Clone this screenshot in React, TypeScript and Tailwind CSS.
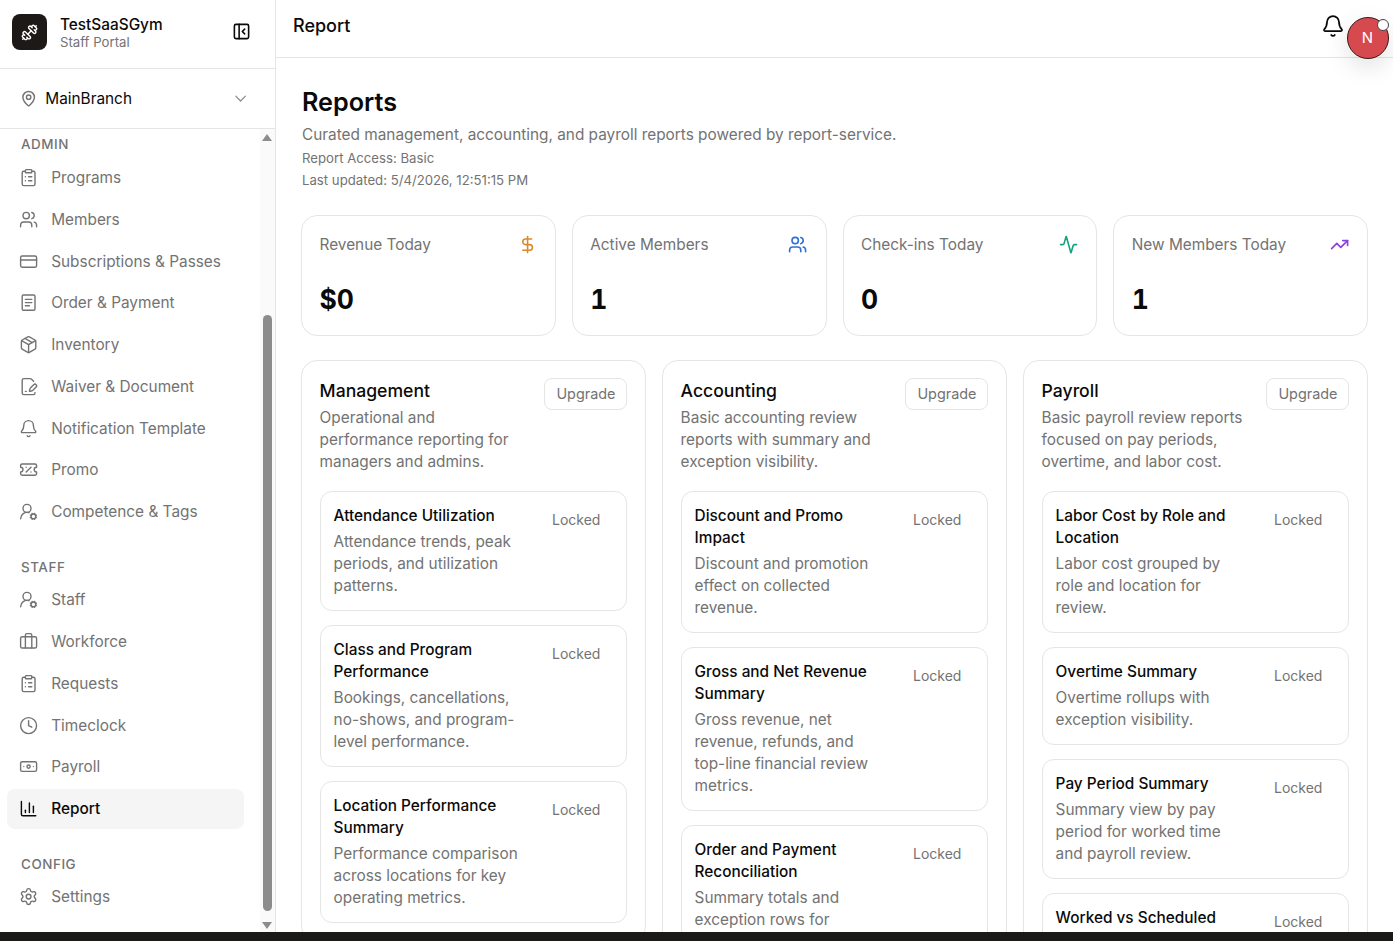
import {
  Activity,
  Banknote,
  Bell,
  Briefcase,
  ChartColumn,
  ChevronDown,
  ClipboardList,
  Clock,
  CreditCard,
  DollarSign,
  Dumbbell,
  FilePenLine,
  MapPin,
  Package,
  PanelLeftClose,
  Settings,
  TicketPercent,
  TrendingUp,
  UserRoundCog,
  Users,
} from "lucide-react";

function OrderIcon({ size = 24, strokeWidth = 2 }: { size?: number; strokeWidth?: number }) {
  return (
    <svg width={size} height={size} viewBox="0 0 24 24" fill="none" stroke="currentColor" strokeWidth={strokeWidth} strokeLinecap="round" strokeLinejoin="round">
      <rect x="4" y="2.5" width="16" height="19" rx="1.5" />
      <path d="M8 8h8M8 12h8M8 16h5" />
    </svg>
  );
}

const navSections = [
  {
    label: "ADMIN",
    items: [
      { name: "Programs", icon: ClipboardList },
      { name: "Members", icon: Users },
      { name: "Subscriptions & Passes", icon: CreditCard },
      { name: "Order & Payment", icon: OrderIcon },
      { name: "Inventory", icon: Package },
      { name: "Waiver & Document", icon: FilePenLine },
      { name: "Notification Template", icon: Bell },
      { name: "Promo", icon: TicketPercent },
      { name: "Competence & Tags", icon: UserRoundCog },
    ],
  },
  {
    label: "STAFF",
    items: [
      { name: "Staff", icon: UserRoundCog },
      { name: "Workforce", icon: Briefcase },
      { name: "Requests", icon: ClipboardList },
      { name: "Timeclock", icon: Clock },
      { name: "Payroll", icon: Banknote },
      { name: "Report", icon: ChartColumn, active: true },
    ],
  },
  {
    label: "CONFIG",
    items: [{ name: "Settings", icon: Settings }],
  },
];

const stats = [
  { title: "Revenue Today", value: "$0", icon: DollarSign, color: "text-[#d98a2b]" },
  { title: "Active Members", value: "1", icon: Users, color: "text-[#2f6fd6]" },
  { title: "Check-ins Today", value: "0", icon: Activity, color: "text-[#16a37f]" },
  { title: "New Members Today", value: "1", icon: TrendingUp, color: "text-[#8b3fe0]" },
];

const columns = [
  {
    title: "Management",
    desc: "Operational and performance reporting for managers and admins.",
    reports: [
      { title: "Attendance Utilization", desc: "Attendance trends, peak periods, and utilization patterns." },
      { title: "Class and Program Performance", desc: "Bookings, cancellations, no-shows, and program-level performance." },
      { title: "Location Performance Summary", desc: "Performance comparison across locations for key operating metrics." },
    ],
  },
  {
    title: "Accounting",
    desc: "Basic accounting review reports with summary and exception visibility.",
    reports: [
      { title: "Discount and Promo Impact", desc: "Discount and promotion effect on collected revenue." },
      { title: "Gross and Net Revenue Summary", desc: "Gross revenue, net revenue, refunds, and top-line financial review metrics." },
      { title: "Order and Payment Reconciliation", desc: "Summary totals and exception rows for reconciliation." },
    ],
  },
  {
    title: "Payroll",
    desc: "Basic payroll review reports focused on pay periods, overtime, and labor cost.",
    reports: [
      { title: "Labor Cost by Role and Location", desc: "Labor cost grouped by role and location for review." },
      { title: "Overtime Summary", desc: "Overtime rollups with exception visibility." },
      { title: "Pay Period Summary", desc: "Summary view by pay period for worked time and payroll review." },
      { title: "Worked vs Scheduled", desc: "Worked hours compared to scheduled hours." },
    ],
  },
];

export default function App() {
  return (
    <div className="flex h-[941px] flex-col overflow-hidden bg-white font-['Inter',sans-serif] text-[#0a0a0a]">
      <div className="flex min-h-0 flex-1">
        <aside className="flex w-[276px] shrink-0 flex-col border-r border-[#e5e5e5]">
          <div className="flex h-[69px] shrink-0 items-center border-b border-[#e5e5e5] pb-1 pl-3 pr-6">
            <div className="flex h-9 w-[35px] items-center justify-center rounded-lg bg-[#1c1917] text-white">
              <Dumbbell size={17} />
            </div>
            <div className="ml-[13px] flex-1">
              <div className="text-[15.36px] leading-[20px] font-medium">TestSaaSGym</div>
              <div className="text-[13.2px] leading-[15px] text-[#737373]">Staff Portal</div>
            </div>
            <PanelLeftClose size={19} className="-mt-[2px]" />
          </div>

          <div className="flex h-[60px] shrink-0 items-center border-b border-[#e5e5e5] pl-5 pr-[25px] pt-[1px]">
            <MapPin size={17.3} className="text-[#737373]" />
            <span className="ml-2 flex-1 text-[15.36px]">MainBranch</span>
            <ChevronDown size={19.2} strokeWidth={1.5} className="text-[#8a8a8a]" />
          </div>

          <div className="flex min-h-0 flex-1">
            <nav className="min-w-0 flex-1 overflow-hidden pl-[7px] pr-4">
              {navSections.map((section, i) => (
                <div key={section.label} className={i === 0 ? "pt-[5.5px]" : "mt-[25px]"}>
                  <div className="flex h-5 items-center px-[14px] text-[13.44px] font-medium tracking-[0.04em] text-[#737373]">
                    {section.label}
                  </div>
                  <ul className="mt-[3.25px] flex flex-col gap-[1.75px]">
                    {section.items.map((item) => (
                      <li
                        key={item.name}
                        className={`flex h-10 items-center gap-[13px] rounded-lg px-3 text-[15.36px] ${
                          item.active ? "bg-[#f5f5f5] font-medium text-[#0a0a0a]" : "text-[#737373]"
                        }`}
                      >
                        <item.icon size={19.2} strokeWidth={1.75} />
                        {item.name}
                      </li>
                    ))}
                  </ul>
                </div>
              ))}
            </nav>
            <div className="flex w-[15px] shrink-0 flex-col items-center bg-[#fafafa] pr-[1px]">
              <div className="mt-[5px] h-0 w-0 border-x-[5.5px] border-b-[7px] border-x-transparent border-b-[#8c8c8c]" />
              <div className="mt-[174px] w-[9px] flex-1 rounded-full bg-[#8c8c8c]" />
              <div className="mt-[11px] mb-[3px] h-0 w-0 border-x-[5.5px] border-t-[7px] border-x-transparent border-t-[#8c8c8c]" />
            </div>
          </div>
        </aside>

        <div className="flex min-w-0 flex-1 flex-col">
          <header className="relative flex h-[58px] shrink-0 items-center border-b border-[#e5e5e5] pl-[17px]">
            <h2 className="mb-[7px] text-[18px] font-medium">Report</h2>
            <Bell size={24} strokeWidth={1.75} className="absolute right-12 top-[14px]" />
            <div className="absolute right-1 top-[17px] flex h-[42px] w-[42px] items-center justify-center rounded-full border border-[#3a1a1a] bg-[#d64a4f] pr-px text-[15px] text-white shadow-[0_8px_24px_rgba(0,0,0,0.12)]">
              N
              <span className="absolute right-[-1px] top-[1px] h-3 w-3 rounded-full border border-[#444] bg-white" />
            </div>
          </header>

          <main className="min-h-0 flex-1 overflow-hidden pl-[25px] pr-[25px] pt-[26px]">
            <div className="pl-px">
              <h1 className="text-[25.2px] leading-[36px] font-semibold">Reports</h1>
              <p className="mt-[3px] text-[15.36px] leading-[24px] text-[#737373]">
                Curated management, accounting, and payroll reports powered by report-service.
              </p>
              <p className="text-[13.2px] leading-[22px] text-[#737373]">Report Access: Basic</p>
              <p className="text-[13.2px] leading-[22px] text-[#737373]">Last updated: 5/4/2026, 12:51:15 PM</p>
            </div>

            <div className="mt-6 grid grid-cols-4 gap-4">
              {stats.map((s) => (
                <div key={s.title} className="h-[121px] rounded-2xl border border-[#e5e5e5] pl-[17.5px] pr-[18px] pt-[18px]">
                  <div className="flex items-center justify-between">
                    <span className="text-[15.36px] leading-[22px] text-[#737373]">{s.title}</span>
                    <s.icon size={19.2} className={s.color} />
                  </div>
                  <div className="mt-[25px] text-[26.5px] leading-[36px] font-bold tabular-nums">{s.value}</div>
                </div>
              ))}
            </div>

            <div className="mt-6 grid grid-cols-3 items-start gap-4">
              {columns.map((col) => (
                <section key={col.title} className="rounded-2xl border border-[#e5e5e5] px-[17.6px] pb-[18px] pt-[17px]">
                  <div className="flex items-start justify-between gap-4">
                    <div className="min-w-0 flex-1">
                      <h3 className="text-[17.6px] leading-[26px] font-medium">{col.title}</h3>
                      <p className="mt-[3px] text-[15.36px] leading-[22px] text-[#737373]">{col.desc}</p>
                    </div>
                    <button className="h-8 w-[83px] shrink-0 rounded-lg border border-[#e5e5e5] text-[14.4px] text-[#737373]">
                      Upgrade
                    </button>
                  </div>
                  <div className="mt-[18px] flex flex-col gap-[14px]">
                    {col.reports.map((r) => (
                      <div key={r.title} className="flex items-start gap-4 rounded-xl border border-[#e5e5e5] pb-[13px] pl-[13px] pr-[14px] pt-[13px]">
                        <div className="min-w-0 flex-1">
                          <div className="text-[15.36px] leading-[22px] font-medium">{r.title}</div>
                          <p className="mt-1 text-[15.36px] leading-[22px] text-[#737373]">{r.desc}</p>
                        </div>
                        <span className="-mt-px shrink-0 px-3 pt-[5px] text-[14px] leading-[22px] text-[#737373]">Locked</span>
                      </div>
                    ))}
                  </div>
                </section>
              ))}
            </div>
          </main>
        </div>
      </div>
      <div className="h-[9px] shrink-0 bg-[#1c1a18]" />
    </div>
  );
}
